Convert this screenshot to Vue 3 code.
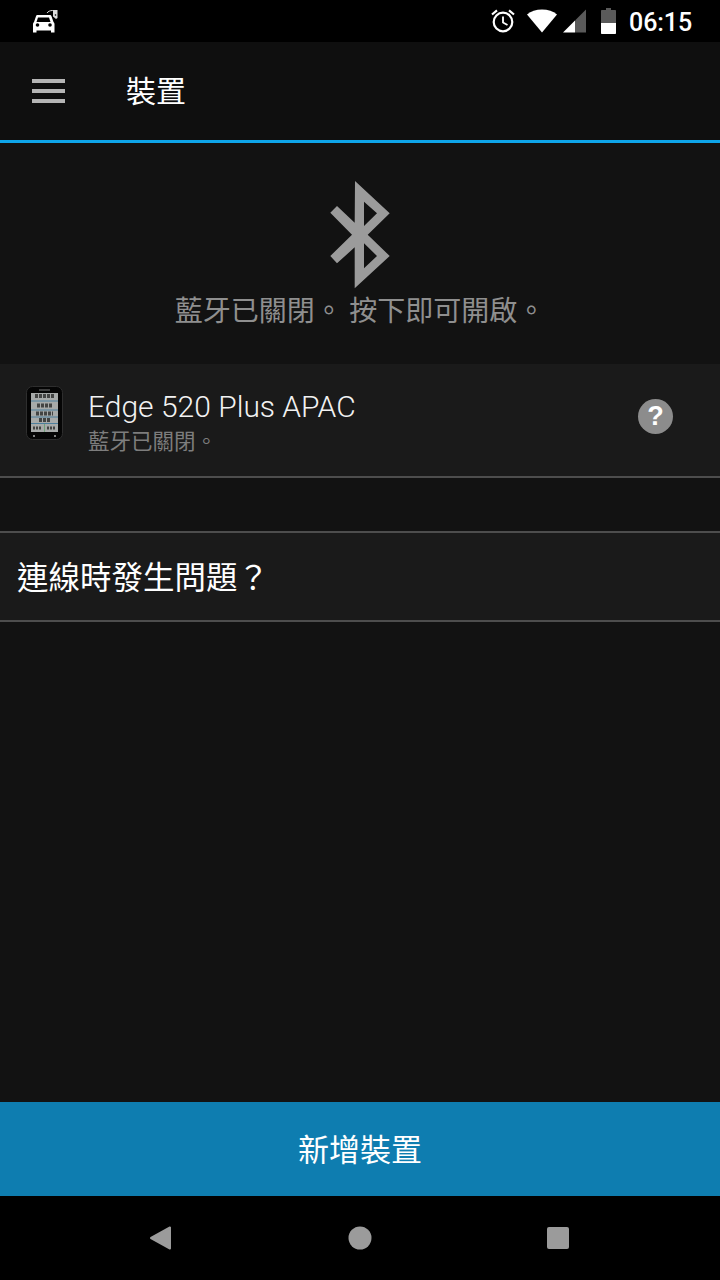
<script setup>
const rows = [
  { y: 10, x: 9, w: 19 },
  { y: 19.500, x: 11, w: 15 },
  { y: 27.500, x: 10, w: 17 },
  { y: 34, x: 13, w: 11 }
]
</script>

<template>
  <div class="phone">
    <header class="status">
      <svg class="car" width="28" height="24" viewBox="0 0 28 24">
        <path fill="#fff" d="M5.500 6h12c1 0 1.700.5 2 1.300l2 5.700c.7.500 1 1.200 1 2V23.500h-3.500v-2H4.500v2H1V15c0-.8.300-1.500 1-2l2-5.700c.2-.8.800-1.300 1.500-1.300z"/>
        <path fill="#000" d="M6 8.500h11l1.500 4.500H4.500z"/>
        <circle cx="5.500" cy="16" r="1.800" fill="#000"/>
        <circle cx="18" cy="16" r="1.800" fill="#000"/>
        <path fill="none" stroke="#ddd" stroke-width="1" d="M15 4c1-1.500 3-2.500 5.500-2.500h1.500"/>
        <path fill="#ddd" d="M21 1h4.500v8l-1.500 1-3-2.500z"/>
        <circle cx="23.500" cy="6" r=".8" fill="#000"/>
      </svg>
      <div class="status-right">
        <svg class="alarm" width="26" height="26" viewBox="0 0 26 26">
          <circle cx="13" cy="14" r="9.300" fill="none" stroke="#fff" stroke-width="2.200"/>
          <path d="M13 8.500V14.500l4.500 2.500" fill="none" stroke="#fff" stroke-width="1.800"/>
          <path d="M2 6.500 7 2.300M24 6.500 19 2.300" fill="none" stroke="#fff" stroke-width="2.200"/>
        </svg>
        <svg class="wifi" width="30" height="24" viewBox="0 0 30 24">
          <path fill="#fff" d="M0 5.500C4 2.300 9 .5 15 .5s11 1.800 15 5L15 23.500z"/>
        </svg>
        <svg class="signal" width="24" height="24" viewBox="0 0 24 24">
          <path fill="#5a5a5a" d="M24 .5V23.500H13V11.500z"/>
          <path fill="#fff" d="M13 11.500V23.500H1z"/>
        </svg>
        <svg class="battery" width="15" height="26" viewBox="0 0 15 26">
          <path fill="#5a5a5a" d="M5 0h5v2h4c.6 0 1 .4 1 1V15H0V3c0-.6.400-1 1-1h4z"/>
          <path fill="#fff" d="M0 15h15v10c0 .6-.4 1-1 1H1c-.6 0-1-.4-1-1z"/>
        </svg>
        <span class="time">06:15</span>
      </div>
    </header>

    <div class="toolbar">
      <div class="menu"><i></i><i></i><i></i></div>
      <h1>裝置</h1>
    </div>

    <main class="content">
      <section class="bt">
        <svg width="66" height="110" viewBox="0 0 66 110">
          <path fill="#9b9b9b" fill-rule="evenodd" d="M28 1 62.700 33.300 40.700 54.700 62.700 76 27.700 108.300V67.300L10 83.300 3.300 76 25 54.700 3.300 32.700 10 26 27.700 42.700zM37 21.700V46L50 33.300zM37 63.300V88.300L50 76z"/>
        </svg>
        <p>藍牙已關閉。 按下即可開啟。</p>
      </section>

      <div class="device">
        <svg class="watch" width="38" height="55" viewBox="0 0 38 55">
          <rect x=".5" y=".5" width="36" height="53" rx="6" fill="#050505" stroke="#2e2e2e"/>
          <path d="M13 4h11" stroke="#777" stroke-width="1"/>
          <rect x="5" y="7" width="27" height="39" fill="#a7aaa9"/>
          <path v-for="r in rows" :key="r.y" :d="`M${r.x} ${r.y}h${r.w}`" stroke="#222" stroke-width="4" stroke-dasharray="3 1" opacity=".75"/>
          <path d="M5 15h27M5 24h27M5 31h27M5 37.500h27" stroke="#4d7f9c" stroke-width="1"/>
          <path d="M7 42h9M21 42h9" stroke="#222" stroke-width="3" stroke-dasharray="2 1" opacity=".75"/>
          <path d="M18.500 38v8" stroke="#6fa07a" stroke-width="1"/>
          <circle cx="8" cy="50" r="1" fill="#aaa"/>
          <circle cx="29" cy="50" r="1" fill="#aaa"/>
        </svg>
        <div class="device-text">
          <div class="name">Edge 520 Plus APAC</div>
          <div class="sub">藍牙已關閉。</div>
        </div>
        <div class="help">?</div>
      </div>

      <div class="trouble">連線時發生問題？</div>
    </main>

    <button class="add">新增裝置</button>

    <nav class="nav">
      <svg width="24" height="26" viewBox="0 0 24 26"><path fill="#9b9b9b" stroke="#9b9b9b" stroke-width="2" stroke-linejoin="round" d="M21 2.500V23.500L2 13z"/></svg>
      <svg width="24" height="24" viewBox="0 0 24 24"><circle cx="12" cy="12" r="11.500" fill="#9b9b9b"/></svg>
      <svg width="22" height="22" viewBox="0 0 22 22"><rect width="22" height="22" rx="2" fill="#9b9b9b"/></svg>
    </nav>
  </div>
</template>

<style scoped>
.phone {
  width: 720px;
  height: 1280px;
  display: flex;
  flex-direction: column;
  background: #121212;
  font-family: "Noto Sans CJK TC", Roboto, sans-serif;
  overflow: hidden;
}
.status {
  height: 42px;
  flex: none;
  background: #000;
  display: flex;
  align-items: center;
  justify-content: space-between;
  padding: 0 28px 0 32px;
  box-sizing: border-box;
}
.status-right { display: flex; align-items: center; }
.wifi { margin-left: 11px; }
.signal { margin-left: 5px; }
.battery { margin-left: 15px; margin-top: -1px; }
.time {
  margin-left: 13px;
  margin-top: 2px;
  color: #fff;
  font: 500 25px/1 Roboto, sans-serif;
  letter-spacing: -.1px;
}
.toolbar {
  height: 98px;
  flex: none;
  box-sizing: border-box;
  background: #0f0f0f;
  display: flex;
  align-items: center;
  padding: 0 0 1px 32px;
}
.menu { width: 33px; display: flex; flex-direction: column; gap: 6px; }
.menu i { display: block; height: 4px; background: #b5b5b5; }
h1 {
  margin: 0 0 3px 61px;
  color: #fff;
  font-size: 30px;
  font-weight: 400;
  line-height: 1;
}
.content {
  flex: 1;
  border-top: 3px solid #0ea5e9;
  display: flex;
  flex-direction: column;
}
.bt {
  height: 221px;
  box-sizing: border-box;
  padding-top: 37px;
  display: flex;
  flex-direction: column;
  align-items: center;
}
.bt svg { flex: none; }
.bt p {
  margin: -3px 0 0;
  color: #8f8f8f;
  font-size: 28px;
  font-weight: 400;
  line-height: 44px;
  white-space: nowrap;
}
.device {
  height: 114px;
  box-sizing: border-box;
  background: #1a1a1a;
  border-bottom: 2px solid #4d4d4d;
  display: flex;
  align-items: center;
  padding: 0 47px 8px 26px;
}
.watch { flex: none; margin-top: -6px; }
.device-text { flex: 1; margin: 12px 0 0 24px; }
.name {
  color: #f2f2f2;
  font: 300 30px/36px Roboto, sans-serif;
}
.sub {
  color: #7d7d7d;
  font-size: 21.500px;
  font-weight: 400;
  line-height: 30px;
}
.help {
  width: 35px;
  height: 35px;
  border-radius: 50%;
  background: #8c8c8c;
  color: #fff;
  font: 700 27px/35px "Liberation Sans", sans-serif;
  text-align: center;
  margin-top: 1px;
}
.trouble {
  margin-top: 53px;
  height: 91px;
  box-sizing: border-box;
  background: #1a1a1a;
  border-top: 2px solid #4d4d4d;
  border-bottom: 2px solid #4d4d4d;
  color: #fff;
  font-size: 31.500px;
  font-weight: 400;
  line-height: 85px;
  padding-left: 17px;
}
.add {
  height: 94px;
  flex: none;
  border: 0;
  padding: 0 0 3px;
  background: #0e7db0;
  color: #fff;
  font-family: inherit;
  font-size: 31px;
  font-weight: 400;
}
.nav {
  height: 84px;
  flex: none;
  background: #000;
  display: flex;
  align-items: center;
  box-sizing: border-box;
  padding: 0 151px 0 149px;
  justify-content: space-between;
}
</style>
